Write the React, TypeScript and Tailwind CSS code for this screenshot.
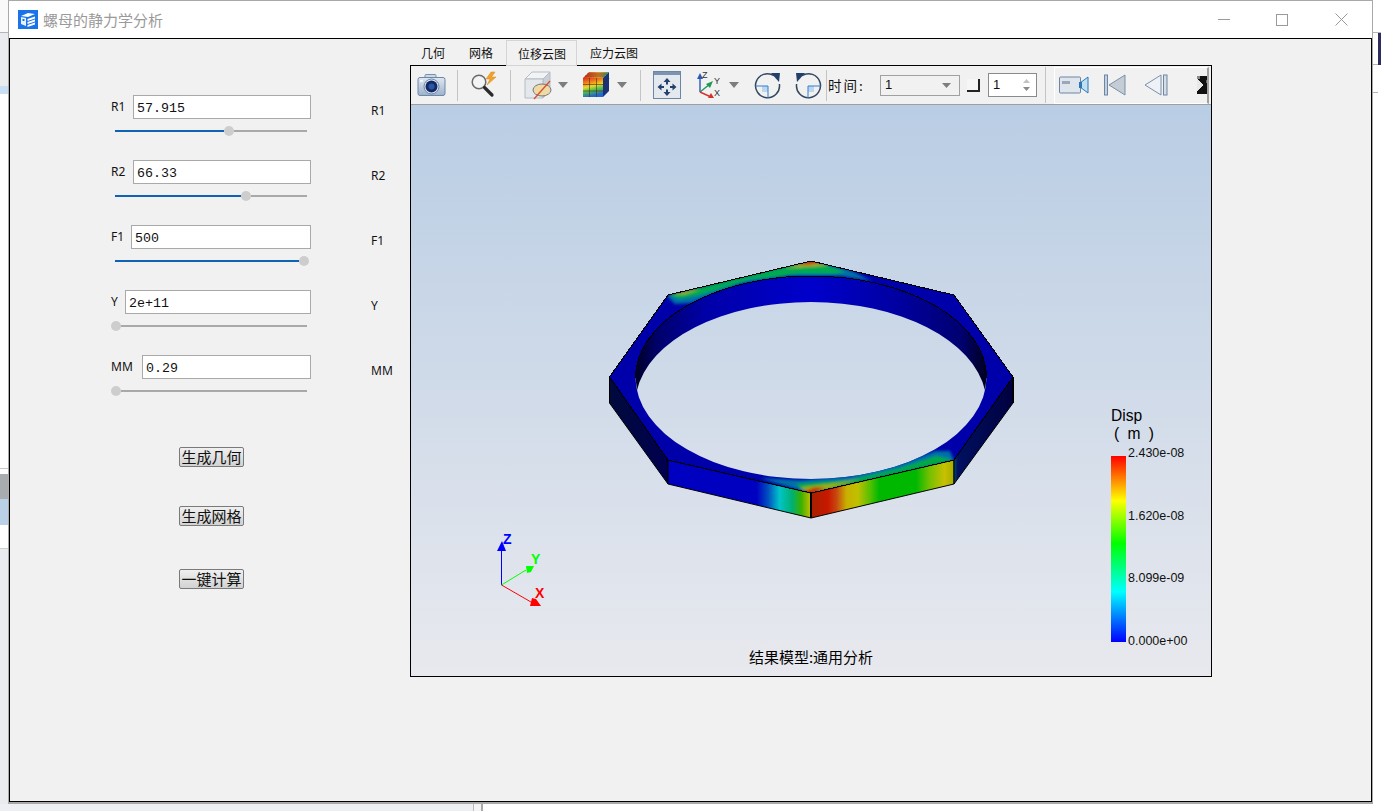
import React from "react";

const params = [
  { name: "R1", value: "57.915", labelW: "w-[22px]", blue: 109, gray: 73 },
  { name: "R2", value: "66.33", labelW: "w-[22px]", blue: 126, gray: 56 },
  { name: "F1", value: "500", labelW: "w-[20px]", blue: 184, gray: 0 },
  { name: "Y", value: "2e+11", labelW: "w-[14px]", blue: 0, gray: 186 },
  { name: "MM", value: "0.29", labelW: "w-[31px]", blue: 0, gray: 186 },
];

const Sep = ({ className = "" }: { className?: string }) => (
  <div className={"w-px h-[31px] shrink-0 bg-[#c4c4c4] " + className} />
);

const Tri = ({ className = "" }: { className?: string }) => (
  <svg width="10" height="6" viewBox="0 0 10 6" className={"shrink-0 " + className}>
    <polygon points="0,0 10,0 5,6" fill="#7d7d7d" />
  </svg>
);

const CameraIcon = () => (
  <svg width="29" height="24" viewBox="0 0 29 24" className="ml-[6px] mb-[1px] shrink-0">
    <defs>
      <linearGradient id="camBody" x1="0" y1="0" x2="0" y2="1">
        <stop offset="0" stopColor="#dfe8f2" />
        <stop offset="1" stopColor="#9db2cb" />
      </linearGradient>
    </defs>
    <rect x="8" y="1.5" width="11" height="5" rx="1" fill="#cbd8e6" stroke="#7890ad" />
    <rect x="1" y="4.5" width="27" height="18" rx="2" fill="url(#camBody)" stroke="#6c87a8" />
    <circle cx="14.5" cy="13.5" r="7.5" fill="#dfe8f2" stroke="#6c87a8" />
    <circle cx="14.5" cy="13.5" r="6" fill="#132a66" />
    <circle cx="14.5" cy="13.5" r="3" fill="#2d55a5" />
    <rect x="3" y="7" width="3" height="2" fill="#f4f7fb" />
  </svg>
);

const SearchBoltIcon = () => (
  <svg width="28" height="28" viewBox="0 0 28 28" className="ml-[12px] shrink-0">
    <circle cx="9" cy="11" r="6.8" fill="#f2f4f6" stroke="#6a6a6a" strokeWidth="1.5" />
    <path d="M14.5 16.5 L22 24" stroke="#2b2b2b" strokeWidth="3.2" strokeLinecap="round" />
    <path d="M21 1 L16 8 L20 8 L17 14 L26 6 L21.5 6 L25 1 Z" fill="#f0a32c" stroke="#d98a1a" strokeWidth="0.5" />
  </svg>
);

const CubeIcon = () => (
  <svg width="29" height="30" viewBox="0 0 29 30" className="ml-[12px] shrink-0">
    <polygon points="2,9 9,2 27,2 20,9" fill="#f2f3f5" stroke="#b5bcc6" />
    <polygon points="20,9 27,2 27,21 20,28" fill="#c9cfd8" stroke="#b5bcc6" />
    <polygon points="2,9 20,9 20,28 2,28" fill="#e4e7eb" stroke="#b5bcc6" />
    <ellipse cx="19" cy="20" rx="9" ry="6" fill="#efd9a4" stroke="#777" strokeWidth="1" />
    <path d="M11 29 L27 11" stroke="#d4502a" strokeWidth="1.3" />
  </svg>
);

const ColorCubeIcon = () => (
  <svg width="28" height="28" viewBox="0 0 28 28" className="ml-[14px] shrink-0">
    <defs>
      <linearGradient id="cubeFront" x1="0" y1="0" x2="0.25" y2="1">
        <stop offset="0" stopColor="#e02a18" />
        <stop offset="0.3" stopColor="#ee8a1c" />
        <stop offset="0.5" stopColor="#e8d82c" />
        <stop offset="0.72" stopColor="#4cc04a" />
        <stop offset="1" stopColor="#2468c8" />
      </linearGradient>
      <linearGradient id="cubeTop" x1="0" y1="0" x2="1" y2="0">
        <stop offset="0" stopColor="#d83020" />
        <stop offset="0.6" stopColor="#e8902a" />
        <stop offset="1" stopColor="#38a870" />
      </linearGradient>
    </defs>
    <polygon points="1,7 7,1 27,1 21,7" fill="url(#cubeTop)" />
    <polygon points="21,7 27,1 27,20 21,26" fill="#16337c" />
    <rect x="1" y="7" width="20" height="19" fill="url(#cubeFront)" />
    <path d="M7.5 7 V26 M14.5 7 V26 M1 13.5 H21 M1 20 H21 M21 13.5 L27 7.5 M21 20 L27 14 M3 5 H23 M5 3 H25" stroke="#4a2c18" strokeWidth="0.6" />
  </svg>
);

const FitIcon = () => (
  <svg width="28" height="28" viewBox="0 0 28 28" className="ml-[12px] shrink-0">
    <rect x="0.5" y="0.5" width="27" height="27" fill="#e4e9f0" stroke="#6d86a5" />
    <rect x="1" y="1" width="26" height="3" fill="#7d94b0" />
    <path d="M14 7 L10.5 11 H13 V13.5 H15 V11 H17.5 Z M14 25 L10.5 21 H13 V18.5 H15 V21 H17.5 Z M4.5 16 L8.5 12.5 V15 H11 V17 H8.5 V19.5 Z M23.5 16 L19.5 12.5 V15 H17 V17 H19.5 V19.5 Z" fill="#23406b" />
  </svg>
);

const TriadIcon = () => (
  <svg width="26" height="28" viewBox="0 0 26 28" className="ml-[15px] shrink-0">
    <path d="M4 21 V6" stroke="#2b59b8" strokeWidth="1.4" />
    <polygon points="4,2 1,8 7,8" fill="#2b59b8" />
    <path d="M4 21 L14 13" stroke="#1d9a55" strokeWidth="1.4" />
    <polygon points="17,10 10,13 14,17" fill="#1d9a55" />
    <path d="M4 21 L15 26" stroke="#d6322c" strokeWidth="1.4" />
    <polygon points="18,27 12,27 15,22" fill="#d6322c" />
    <text x="6" y="7" fontSize="9" fill="#333" fontFamily="'Liberation Sans', sans-serif">Z</text>
    <text x="18" y="13" fontSize="9" fill="#333" fontFamily="'Liberation Sans', sans-serif">Y</text>
    <text x="18" y="25" fontSize="9" fill="#333" fontFamily="'Liberation Sans', sans-serif">X</text>
  </svg>
);

const RotateIcon = ({ flip = false, className = "" }: { flip?: boolean; className?: string }) => (
  <svg width="27" height="27" viewBox="0 0 27 27" className={"shrink-0 " + className}>
    <g transform={flip ? "translate(27 0) scale(-1 1)" : undefined}>
      <path d="M20 3.6 A12 12 0 1 0 25.4 12" fill="none" stroke="#33475f" strokeWidth="1.5" />
      <polygon points="17,1 26,1 25,10" fill="#23406b" />
      <rect x="8" y="14" width="6" height="6" fill="#bcd6ee" />
      <path d="M1.5 14 H14 V26" fill="none" stroke="#2f80d0" strokeWidth="1" />
    </g>
  </svg>
);

const VideoIcon = () => (
  <svg width="30" height="18" viewBox="0 0 30 18" className="ml-[4px] shrink-0">
    <rect x="0.5" y="1" width="21" height="16" rx="1" fill="#dfe5ec" stroke="#6d86a5" />
    <rect x="3" y="5" width="8" height="3" fill="#9aa8b8" />
    <polygon points="21,7 29,1 29,17 21,11" fill="#bfe0f2" stroke="#2a78b8" />
    <rect x="20" y="6" width="3" height="6" fill="#2a78b8" />
  </svg>
);

const FirstIcon = () => (
  <svg width="22" height="22" viewBox="0 0 22 22" className="ml-[15px] shrink-0">
    <rect x="0.5" y="1" width="3" height="20" fill="#c6d0dc" stroke="#6d86a5" />
    <polygon points="5,11 21,1 21,21" fill="#c4ccd6" stroke="#7b90a8" />
  </svg>
);

const PrevIcon = () => (
  <svg width="24" height="22" viewBox="0 0 24 22" className="ml-[18px] shrink-0">
    <polygon points="1,11 17,1 17,21" fill="#eef1f5" stroke="#7b90a8" />
    <rect x="19.5" y="1" width="3.5" height="20" fill="#d6dde6" stroke="#6d86a5" />
  </svg>
);

const NextClip = () => (
  <svg width="12" height="18" viewBox="0 0 12 18" className="ml-[29px] shrink-0" shapeRendering="crispEdges">
    <rect width="12" height="18" fill="#111" />
    <polygon points="0,3 6,9 0,15" fill="#e8e8e8" />
    <rect x="0" y="0" width="3" height="3" fill="#8a8a8a" />
    <rect x="9" y="4" width="3" height="3" fill="#6a6a6a" />
  </svg>
);

const Nut = () => (
  <svg viewBox="411 105 800 571" className="absolute inset-0 w-full h-full">
    <defs>
      <linearGradient id="frontLeft" gradientUnits="userSpaceOnUse" x1="668" y1="0" x2="811" y2="0">
        <stop offset="0" stopColor="#0000c0" />
        <stop offset="0.62" stopColor="#0000c0" />
        <stop offset="0.7" stopColor="#0050c0" />
        <stop offset="0.78" stopColor="#00c4c8" />
        <stop offset="0.87" stopColor="#00b070" />
        <stop offset="0.93" stopColor="#38b000" />
        <stop offset="1" stopColor="#c8c000" />
      </linearGradient>
      <linearGradient id="frontRight" gradientUnits="userSpaceOnUse" x1="811" y1="0" x2="953" y2="0">
        <stop offset="0" stopColor="#a82000" />
        <stop offset="0.12" stopColor="#c81800" />
        <stop offset="0.18" stopColor="#c84810" />
        <stop offset="0.25" stopColor="#c8b000" />
        <stop offset="0.33" stopColor="#c0c000" />
        <stop offset="0.42" stopColor="#50c000" />
        <stop offset="0.48" stopColor="#00b800" />
        <stop offset="0.74" stopColor="#00b800" />
        <stop offset="0.83" stopColor="#70c000" />
        <stop offset="0.94" stopColor="#c8c000" />
        <stop offset="1" stopColor="#a8b000" />
      </linearGradient>
      <linearGradient id="wall" gradientUnits="userSpaceOnUse" x1="636" y1="0" x2="986" y2="0">
        <stop offset="0" stopColor="#000028" />
        <stop offset="0.06" stopColor="#00006a" />
        <stop offset="0.2" stopColor="#0000a8" />
        <stop offset="0.5" stopColor="#0000cc" />
        <stop offset="0.75" stopColor="#0000a0" />
        <stop offset="0.93" stopColor="#000070" />
        <stop offset="1" stopColor="#000020" />
      </linearGradient>
      <linearGradient id="rightSide" gradientUnits="userSpaceOnUse" x1="953" y1="0" x2="1013" y2="0">
        <stop offset="0" stopColor="#005a70" />
        <stop offset="0.08" stopColor="#001060" />
        <stop offset="1" stopColor="#000040" />
      </linearGradient>
      <linearGradient id="leftSide" gradientUnits="userSpaceOnUse" x1="609" y1="0" x2="668" y2="0">
        <stop offset="0" stopColor="#000a3c" />
        <stop offset="1" stopColor="#000050" />
      </linearGradient>
      <clipPath id="topFace">
        <path
          clipRule="evenodd"
          d="M811 261 L954 295 L1013 377 L954 460 L811 493 L668 460 L609.5 377 L668 295 Z M635.5 377.5 A175.5 101.5 0 0 0 986.5 377.5 A175.5 101.5 0 0 0 635.5 377.5 Z"
        />
      </clipPath>
      <filter id="soft" x="-10%" y="-40%" width="120%" height="180%">
        <feGaussianBlur stdDeviation="1.6" />
      </filter>
    </defs>

    <polygon points="609.5,377 668,460 668,484 609.5,403" fill="url(#leftSide)" stroke="#000" />
    <polygon points="668,460 811,493 811,518 668,484" fill="url(#frontLeft)" stroke="#000" />
    <polygon points="811,493 954,460 954,484 811,518" fill="url(#frontRight)" stroke="#000" />
    <polygon points="954,460 1013,377 1013,403 954,484" fill="url(#rightSide)" stroke="#000" />

    <path
      d="M635.5 377.5 A175.5 101.5 0 0 1 986.5 377.5 L985.05 390.5 A175.5 101.5 0 0 0 636.95 390.5 Z"
      fill="url(#wall)"
    />
    <path
      fillRule="evenodd"
      fill="#0000aa"
      d="M811 261 L954 295 L1013 377 L954 460 L811 493 L668 460 L609.5 377 L668 295 Z M635.5 377.5 A175.5 101.5 0 0 0 986.5 377.5 A175.5 101.5 0 0 0 635.5 377.5 Z"
    />

    <g clipPath="url(#topFace)">
      <g filter="url(#soft)">
        <polygon points="667,296 675,304 692,303 740,284 790,276 840,276 872,281 850,270 811,260" fill="#0070a8" />
        <polygon points="668,295 680,299 700,295 750,280 800,274 835,274 846,272 811,260" fill="#00aa50" />
        <polygon points="672,294 684,294 700,289 690,290" fill="#b0b800" />
        <polygon points="785,268 812,262 830,265 812,266" fill="#c0b000" />
        <polygon points="798,265 811,260 820,263 808,265" fill="#c83000" />
        <polygon points="954,461 950,451 935,451 900,464 850,476 800,480 760,478 811,494" fill="#0070a8" />
        <polygon points="954,460 936,456 900,468 850,480 795,484 811,494" fill="#00aa40" />
        <polygon points="800,488 840,483 860,479 830,488 811,494" fill="#a8b000" />
        <polygon points="804,491 815,487 826,488 811,494" fill="#c83000" />
      </g>
    </g>

    <path d="M635.5 377.5 A175.5 101.5 0 0 1 986.5 377.5" fill="none" stroke="#000" shapeRendering="crispEdges" />
    <polygon
      points="811,261 954,295 1013,377 954,460 811,493 668,460 609.5,377 668,295"
      fill="none"
      stroke="#000"
      shapeRendering="crispEdges"
    />
    <path d="M609.5 377 V403 M1013 377 V403 M811 493 V518" stroke="#000" strokeWidth="1.2" shapeRendering="crispEdges" />

    <g strokeWidth="1" shapeRendering="crispEdges">
      <path d="M501.5 585 V550" stroke="#0000ff" />
    </g>
    <polygon points="502,541 506,551 497,551" fill="#0000ff" />
    <path d="M501.5 585 L526 570" stroke="#00ff00" />
    <polygon points="534,566 526,566 527,573 531,572" fill="#00ff00" />
    <path d="M501.5 585 L531 602" stroke="#ff0000" />
    <polygon points="541,606 530,606 532,598 536,599" fill="#ff0000" />
    <g fontFamily="'Liberation Sans', sans-serif" fontWeight="700" fontSize="14">
      <text x="503" y="544" fill="#0000ff">Z</text>
      <text x="531" y="564" fill="#00ff00">Y</text>
      <text x="535" y="598" fill="#ff0000">X</text>
    </g>
  </svg>
);

export default function App() {
  return (
    <div className="flex flex-col w-[1381px] h-[811px] overflow-hidden bg-white text-[#111] font-['Noto_Sans','Noto_Sans_CJK_SC',sans-serif]">
      <div className="flex h-[804px]">
        {/* stuff peeking out behind the window */}
        <div className="flex flex-col w-[8px] shrink-0">
          <div className="h-[33px] bg-[#f9f9f9] border-b border-[#b5b5b5]" />
          <div className="h-[53px] bg-[#e9ebee]" />
          <div className="h-[8px] bg-[#c9ddf5]" />
          <div className="h-[375px] bg-white border-b border-[#c8c8c8]" />
          <div className="h-[5px] bg-white" />
          <div className="h-[25px] bg-[#a9acae]" />
          <div className="h-[26px] bg-[#b9d0e6]" />
          <div className="h-[24px] bg-white border-b border-[#d0d0d0]" />
          <div className="flex-1 bg-[#e9ebee]" />
        </div>

        <div className="flex flex-col w-[1365px] shrink-0 border border-[#a9a9a9] border-b-2 border-r-[#a9a9a9] bg-white">
          <div className="flex items-center h-[37px] shrink-0">
            <svg width="20" height="19" viewBox="0 0 20 19" className="ml-[9px] shrink-0">
              <rect width="20" height="19" fill="#1a73e8" />
              <path d="M3 6 L10 3 L17 4 L10 7 Z" fill="#ffffff" />
              <path d="M3 7 L8 8 V16 L3 14 Z" fill="#ffffff" opacity="0.9" />
              <path d="M9.5 9 L17 6.5 V8.5 L9.5 11 Z M9.5 12 L17 9.5 V11.5 L9.5 14 Z M9.5 15 L17 12.5 V14.5 L9.5 17 Z" fill="#ffffff" />
              <rect x="4.5" y="9" width="2" height="2" fill="#1a73e8" />
            </svg>
            <span className="ml-[5px] text-[15px] leading-none text-[#9a9a9a] font-['Noto_Sans_CJK_SC',sans-serif]">
              螺母的静力学分析
            </span>
            <div className="flex-1" />
            <svg width="12" height="2" viewBox="0 0 12 2" className="shrink-0 mr-[46px]">
              <rect width="12" height="1" fill="#9a9a9a" />
            </svg>
            <div className="w-[12px] h-[12px] border border-[#9a9a9a] shrink-0 mr-[47px]" />
            <svg width="13" height="13" viewBox="0 0 13 13" className="shrink-0 mr-[24px]">
              <path d="M0.5 0.5 L12.5 12.5 M12.5 0.5 L0.5 12.5" stroke="#9a9a9a" />
            </svg>
          </div>

          <div className="flex flex-1 border border-black bg-[#f1f1f1]">
            {/* params */}
            <div className="w-[400px] shrink-0 pt-[56px]">
              {params.map((p) => (
                <div key={p.name} className="flex h-[65px]">
                  <div className="w-[301px] shrink-0 pl-[101px]">
                    <div className="flex items-center h-[24px] text-[12px]">
                      <div className={"shrink-0 " + p.labelW}>{p.name}</div>
                      <div className="flex items-center flex-1 h-[24px] pl-[3px] pt-[3px] border border-[#a9a9a9] bg-white text-[13.3px] font-['Liberation_Mono',monospace]">
                        {p.value}
                      </div>
                    </div>
                    <div className="flex items-center h-[10px] mt-[7px]">
                      {p.blue > 0 && (
                        <div className="h-[2px] ml-[4px] bg-[#0f63b5]" style={{ width: p.blue }} />
                      )}
                      <div className="w-[10px] h-[10px] shrink-0 rounded-full bg-[#cdcdcd]" />
                      <div className="h-[2px] bg-[#a9a9a9]" style={{ width: p.gray }} />
                    </div>
                  </div>
                  <div className="ml-[60px] mt-[7px] h-[18px] text-[12px] leading-[18px]">{p.name}</div>
                </div>
              ))}

              <div className="pl-[169px]">
                <button className="block w-[65px] h-[20px] mt-[27px] pb-[2px] border border-[#7a7a7a] rounded-[2px] bg-linear-to-b from-[#f0f0f0] to-[#d2d2d2] text-[15px] leading-none font-['Noto_Sans_CJK_SC',sans-serif]">
                  生成几何
                </button>
                <button className="block w-[65px] h-[20px] mt-[39px] pb-[2px] border border-[#7a7a7a] rounded-[2px] bg-linear-to-b from-[#f0f0f0] to-[#d2d2d2] text-[15px] leading-none font-['Noto_Sans_CJK_SC',sans-serif]">
                  生成网格
                </button>
                <button className="block w-[65px] h-[20px] mt-[43px] pb-[2px] border border-[#7a7a7a] rounded-[2px] bg-linear-to-b from-[#f0f0f0] to-[#d2d2d2] text-[15px] leading-none font-['Noto_Sans_CJK_SC',sans-serif]">
                  一键计算
                </button>
              </div>
            </div>

            {/* tab widget */}
            <div className="w-[802px] shrink-0 pt-px">
              <div className="flex h-[25px] ml-[-1px] text-[12px] font-['Noto_Sans_CJK_SC',sans-serif]">
                <div className="flex items-center px-3 pt-px">几何</div>
                <div className="flex items-center px-3 pt-px">网格</div>
                <div className="relative z-10 flex items-center w-[71px] shrink-0 ml-px pl-[11px] pt-px h-[26px] border border-[#d4d4d4] bg-[#f1f1f1]">
                  位移云图
                </div>
                <div className="flex items-center px-3 pt-px ml-px">应力云图</div>
              </div>

              <div className="flex flex-col h-[612px] border border-black">
                <div className="flex items-center h-[39px] shrink-0 border-b border-[#9f9f9f] bg-[#f1f1f1] overflow-hidden">
                  <CameraIcon />
                  <Sep className="ml-[11px]" />
                  <SearchBoltIcon />
                  <Sep className="ml-[12px]" />
                  <CubeIcon />
                  <Tri className="ml-[6px]" />
                  <ColorCubeIcon />
                  <Tri className="ml-[7px]" />
                  <Sep className="ml-[13px]" />
                  <FitIcon />
                  <TriadIcon />
                  <Tri className="ml-[7px]" />
                  <RotateIcon className="ml-[15px]" />
                  <RotateIcon flip className="ml-[14px]" />
                  <Sep className="ml-[4px]" />
                  <div className="ml-px w-[37px] shrink-0 text-[13.5px] tracking-[2px] whitespace-nowrap font-['Noto_Sans_CJK_SC',sans-serif]">
                    时间:
                  </div>
                  <div className="flex items-center justify-between ml-[15px] w-[80px] h-[21px] shrink-0 pl-[4px] pr-[8px] border border-[#a0a0a0] text-[13px] font-['Liberation_Sans',sans-serif]">
                    <span>1</span>
                    <svg width="9" height="5" viewBox="0 0 9 5">
                      <polygon points="0,0 9,0 4.5,5" fill="#7d7d7d" />
                    </svg>
                  </div>
                  <div className="ml-[7px] w-[13px] h-[13px] shrink-0 border-r-2 border-b-2 border-[#222] bg-[#f6f6f6]" />
                  <div className="flex items-center justify-between ml-[8px] w-[49px] h-[24px] shrink-0 pl-[4px] pr-[6px] border border-[#8a8a8a] bg-white text-[13px] font-['Liberation_Sans',sans-serif]">
                    <span>1</span>
                    <svg width="7" height="14" viewBox="0 0 7 14">
                      <polygon points="3.5,1 7,5 0,5" fill="#c2c2c2" />
                      <polygon points="0,9 7,9 3.5,13" fill="#8a8a8a" />
                    </svg>
                  </div>
                  <Sep className="ml-[8px] h-[36px]" />
                  <div className="flex items-center ml-[8px] w-[155px] h-[37px] shrink-0 overflow-hidden border-t border-l border-b border-r-2 border-white border-r-[#a0a0a0]">
                    <VideoIcon />
                    <FirstIcon />
                    <PrevIcon />
                    <NextClip />
                  </div>
                </div>

                <div className="relative flex-1 bg-linear-to-b from-[#b9cde4] to-[#e8e9ee]">
                  <Nut />

                  <div className="absolute left-[700px] top-[302px]">
                    <div className="text-[15.6px] leading-[18px] text-black font-['Liberation_Sans',sans-serif]">Disp</div>
                    <div className="ml-[3px] text-[15.6px] leading-[18px] tracking-[2px] text-black whitespace-pre font-['Liberation_Sans',sans-serif]">( m )</div>
                    <div className="flex mt-[3px]">
                      <div className="w-[15px] h-[186px] mt-[10px] bg-[linear-gradient(to_bottom,#ff0000,#ffff00_24%,#00ff00_47%,#00ffff_73%,#0000ff)]" />
                      <div className="flex flex-col justify-between ml-[2px] h-[202px] text-[12.5px] leading-[14px] text-[#111] font-['Liberation_Sans',sans-serif]">
                        <span>2.430e-08</span>
                        <span>1.620e-08</span>
                        <span>8.099e-09</span>
                        <span>0.000e+00</span>
                      </div>
                    </div>
                  </div>

                  <div className="absolute inset-x-0 bottom-[10px] text-center text-[15px] leading-[18px] text-black font-['Noto_Sans_CJK_SC',sans-serif]">
                    结果模型:通用分析
                  </div>
                </div>
              </div>
            </div>
          </div>
        </div>

        <div className="flex flex-col w-[8px] shrink-0">
          <div className="h-[33px] border-b border-[#b5b5b5]" />
          <div className="flex h-[32px]">
            <div className="w-[5px] border-b border-[#b5b5b5]" />
            <div className="flex-1 bg-[#2d2d5e]" />
          </div>
          <div className="h-[28px] w-[5px] border-b border-[#b5b5b5]" />
          <div className="flex-1" />
        </div>
      </div>

      <div className="flex flex-1">
        <div className="w-[473px] bg-[#edeff2]" />
        <div className="w-px bg-[#bcbcbc]" />
        <div className="w-[7px] bg-[#f4f4f4]" />
        <div className="w-[2px] bg-[#a9a9a9]" />
        <div className="flex-1 bg-white" />
      </div>
    </div>
  );
}
